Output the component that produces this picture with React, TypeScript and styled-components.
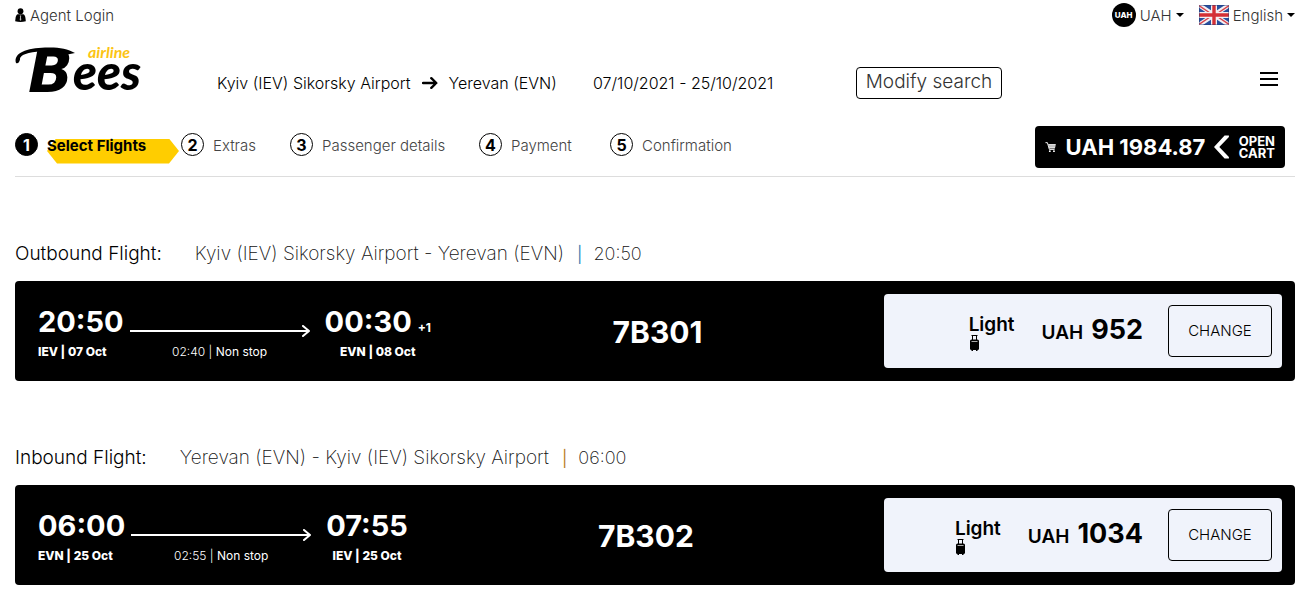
import React from "react";
import styled, { createGlobalStyle, css } from "styled-components";

const GlobalStyle = createGlobalStyle`
  *, *::before, *::after { box-sizing: border-box; }
  body {
    margin: 0;
    background: #fff;
    color: #000;
    font-family: Inter, "Liberation Sans", sans-serif;
    font-size: 16px;
  }
  button, select { font: inherit; color: inherit; }
`;

const Page = styled.div`
  padding: 0 9px 10px 15px;
`;

const TopBar = styled.div`
  display: flex;
  align-items: center;
  height: 30px;
  font-size: 15px;
  font-weight: 300;
  color: #333;
`;

const AgentLink = styled.a`
  display: flex;
  align-items: center;
  gap: 4px;
  margin-right: auto;
  color: inherit;
  text-decoration: none;
`;

const Picker = styled.label`
  display: flex;
  align-items: center;
  gap: 4px;
  margin-left: 15px;
`;

const CurrencyBadge = styled.span`
  display: flex;
  align-items: center;
  justify-content: center;
  width: 24px;
  height: 24px;
  border-radius: 50%;
  background: #000;
  color: #fff;
  font-size: 8px;
  font-weight: 800;
`;

const PickerSelect = styled.select`
  appearance: none;
  field-sizing: content;
  padding: 0;
  border: 0;
  background: none;
  cursor: pointer;
`;

const Header = styled.header`
  display: grid;
  grid-template-columns: 202px 376px 263px auto 1fr;
  align-items: center;
  height: 86px;
  padding: 19px 17px 0 0;
  font-weight: 300;
`;

const LogoLink = styled.a`
  display: block;
  width: 128px;
  height: 52px;
  margin-top: -26px;
`;

const Route = styled.div`
  display: flex;
  align-items: center;
  gap: 11px;
  white-space: nowrap;
`;

const OutlineButton = styled.button<{ $large?: boolean }>`
  border: 1px solid #000;
  border-radius: 4px;
  background: none;
  font-weight: 300;
  cursor: pointer;
  white-space: nowrap;
  ${(p) =>
    p.$large
      ? css`
          width: 104px;
          height: 52px;
          padding: 0 0 2px;
          font-size: 15px;
          margin-left: 25px;
        `
      : css`
          width: 146px;
          height: 32px;
          padding: 0 0 2px;
          font-size: 19px;
          color: #333;
        `}
`;

const MenuButton = styled.button`
  display: flex;
  flex-direction: column;
  gap: 4px;
  justify-self: end;
  width: 18px;
  margin-top: -8px;
  padding: 0;
  border: 0;
  background: none;
  cursor: pointer;
`;

const MenuBar = styled.span`
  height: 2px;
  width: 100%;
  background: #000;
`;

const ProgressRow = styled.div`
  display: flex;
  align-items: center;
  justify-content: space-between;
  height: 61px;
  padding: 1px 10px 0 0;
  border-bottom: 1px solid #ddd;
`;

const Steps = styled.ol`
  display: grid;
  grid-template-columns: 166px 109px 189px 131px auto;
  margin: 0;
  padding: 0 0 4px;
  list-style: none;
`;

const Step = styled.li`
  display: flex;
  align-items: center;
  gap: 9px;
`;

const StepNumber = styled.span<{ $active?: boolean }>`
  display: flex;
  align-items: center;
  justify-content: center;
  width: 23px;
  height: 23px;
  border: 1px solid #000;
  border-radius: 50%;
  background: ${(p) => (p.$active ? "#000" : "#fff")};
  color: ${(p) => (p.$active ? "#fff" : "#000")};
  font-size: 16px;
  font-weight: 700;
`;

const StepLabel = styled.span<{ $active?: boolean }>`
  position: relative;
  z-index: 0;
  padding-top: 1px;
  font-size: 15px;
  line-height: 17px;
  white-space: nowrap;
  font-weight: ${(p) => (p.$active ? 700 : 300)};
  color: ${(p) => (p.$active ? "#000" : "#444")};
  ${(p) =>
    p.$active &&
    css`
      &::before {
        content: "";
        position: absolute;
        z-index: -1;
        left: 0;
        top: 3px;
        width: 132px;
        height: 25px;
        background: #ffcd00;
        clip-path: polygon(9px 0, 122px 0, 100% 50%, 122px 100%, 10px 100%, 0 50%);
      }
    `}
`;

const CartButton = styled.button`
  display: flex;
  align-items: center;
  gap: 9px;
  width: 250px;
  height: 42px;
  padding: 0 10px;
  border: 0;
  border-radius: 4px;
  background: #000;
  color: #fff;
  font-size: 22px;
  font-weight: 700;
  cursor: pointer;
  white-space: nowrap;
`;

const CartCaption = styled.span`
  flex: 1;
  font-size: 13px;
  line-height: 12px;
  text-align: center;
  white-space: normal;
`;

const FlightSection = styled.section`
  padding-top: 64px;
`;

const FlightHeading = styled.h2`
  display: flex;
  height: 40px;
  padding-top: 2px;
  margin: 0;
  font-size: 19px;
  line-height: 22px;
  font-weight: 300;
  white-space: nowrap;
`;

const RouteSummary = styled.span`
  margin-left: 33px;
  font-weight: 200;
  color: #111;
`;

const Divider = styled.span<{ $color: string }>`
  margin: 0 11px 0 13px;
  font-size: 16px;
  font-weight: 400;
  color: ${(p) => p.$color};
`;

const HeadingTime = styled.span`
  font-size: 18px;
  font-weight: 200;
  color: #111;
`;

const FlightCard = styled.article`
  display: flex;
  align-items: center;
  height: 100px;
  padding: 0 13px 0 23px;
  border-radius: 4px;
  background: #000;
  color: #fff;
`;

const Stop = styled.div<{ $center?: boolean }>`
  padding-top: 1px;
  text-align: ${(p) => (p.$center ? "center" : "left")};
  white-space: nowrap;
`;

const Time = styled.div`
  height: 40px;
  font-size: 29px;
  line-height: 40px;
  font-weight: 700;
`;

const DayShift = styled.sup`
  margin-left: 6px;
  font-size: 12px;
  line-height: 12px;
  vertical-align: baseline;
`;

const Place = styled.div`
  font-size: 12px;
  line-height: 20px;
  font-weight: 800;
`;

const Leg = styled.div`
  width: 180px;
  margin: 0 15px 0 6px;
  padding-top: 2px;
  text-align: center;
`;

const LegLine = styled.div`
  display: flex;
  align-items: center;
  height: 40px;
  padding-top: 19px;
`;

const LegInfo = styled.div`
  font-size: 12px;
  line-height: 22px;
`;

const Duration = styled.span`
  font-weight: 300;
`;

const FlightNumber = styled.div`
  flex: 1;
  padding-top: 2px;
  text-align: center;
  font-size: 30px;
  font-weight: 700;
`;

const FarePanel = styled.div`
  display: flex;
  align-items: center;
  justify-content: flex-end;
  width: 398px;
  height: 74px;
  padding-right: 10px;
  border-radius: 4px;
  background: #f0f3fb;
  color: #000;
`;

const FareName = styled.div`
  display: flex;
  flex-direction: column;
  margin-right: 27px;
  padding-top: 2px;
  font-size: 19px;
  line-height: 22px;
  font-weight: 600;
  svg { margin: -1px 0 0 1px; }
`;

const Price = styled.div`
  padding-bottom: 4px;
  font-size: 19px;
  font-weight: 600;
  white-space: nowrap;
`;

const Amount = styled.strong`
  margin-left: 8px;
  font-size: 27px;
  font-weight: 700;
`;

const PersonIcon = () => (
  <svg width="11" height="14" viewBox="0 0 11 14" aria-hidden="true">
    <circle cx="5.5" cy="3.2" r="2.9" />
    <path d="M2.5 6.2H8.5Q10.6 7 10.8 13.2Q5.5 14.6 .2 13.2Q.4 7 2.5 6.2Z" />
    <path d="M5.5 7.2L6.3 8L5.9 8.8L6.3 12L5.5 12.8L4.7 12L5.1 8.8L4.7 8Z" fill="#bbb" />
  </svg>
);

const Caret = () => (
  <svg width="8" height="4" viewBox="0 0 8 4" aria-hidden="true">
    <path d="M0 0H8L4 4Z" />
  </svg>
);

const Flag = () => (
  <svg width="30" height="20" viewBox="0 0 30 20" aria-hidden="true">
    <rect width="30" height="20" fill="#29509e" />
    <path d="M0 0L30 20M30 0L0 20" stroke="#f3f0f3" strokeWidth="4.4" />
    <path d="M0 .6L14 10M30 19.4L16 10M30 .6L16 10M0 19.4L14 10" stroke="#d8434b" strokeWidth="1.4" />
    <path d="M15 0V20M0 10H30" stroke="#f3f0f3" strokeWidth="6" />
    <path d="M15 0V20M0 10H30" stroke="#d42f35" strokeWidth="3.4" />
    <rect x=".5" y=".5" width="29" height="19" fill="none" stroke="#1d3470" strokeOpacity=".4" />
  </svg>
);

const LogoDrawing = styled.svg`
  display: block;
  overflow: visible;
`;

const Logo = () => (
  <LogoDrawing width="128" height="52" viewBox="0 0 128 52" role="img" aria-label="Bees airline">
    <path d="M1 19C-2 9 12 4 30 3.500C42 3 52 4 60 9L50 11C42 7 34 7 26 7.500C14 8 4 11 5 15.500Q4 20 1 19Z" />
    <text fontFamily="Lato, sans-serif" fontStyle="italic" fontWeight="900">
      <tspan x="13" y="48" fontFamily="'DejaVu Sans', sans-serif" fontSize="59" fontWeight="700">B</tspan>
      <tspan x="58" y="46" fontSize="49">ees</tspan>
      <tspan x="73" y="14" fontSize="16" fontWeight="700" fill="#fcc414">airline</tspan>
    </text>
  </LogoDrawing>
);

const RouteArrow = () => (
  <svg width="16" height="14" viewBox="0 0 16 14" fill="none" stroke="#000" strokeWidth="2.4" aria-hidden="true">
    <path d="M1 7H14M9.300 2.200L14.300 7L9.300 11.800" strokeLinecap="round" strokeLinejoin="round" />
  </svg>
);

const CartIcon = () => (
  <svg width="12" height="12" viewBox="0 0 12 12" aria-hidden="true">
    <path d="M.5 1.500H2.500L4.500 8.500H10" fill="none" stroke="#fff" />
    <path d="M3.200 3H11.300L10.300 7.500H4.400Z" fill="#ddd" />
    <path d="M4 5H11" stroke="#777" strokeWidth=".5" />
    <circle cx="5" cy="10.300" r="1" fill="#fff" />
    <circle cx="9.300" cy="10.300" r="1" fill="#fff" />
  </svg>
);

const Chevron = () => (
  <svg width="16" height="24" viewBox="0 0 16 24" fill="#fff" aria-hidden="true">
    <path d="M11 0H15.500V1.500L5.500 12L15.500 22.500V24H11L0 12Z" />
  </svg>
);

const LegArrow = () => (
  <svg width="180" height="12" viewBox="0 0 180 12" fill="none" stroke="#fff" strokeWidth="2" aria-hidden="true">
    <path d="M0 6H179M173 1L179 6L173 11" strokeLinecap="round" strokeLinejoin="round" />
  </svg>
);

const Suitcase = () => (
  <svg width="9" height="16" viewBox="0 0 9 16" aria-hidden="true">
    <path d="M1.500 .5H7.500M2.500 .5V5M6.500 .5V5" fill="none" stroke="#000" />
    <rect y="4.500" width="9" height="10.500" rx="1.500" />
    <path d="M1.500 6.500H7.500" stroke="#aaa" />
    <path d="M1.500 15.500H3M6 15.500H7.500" stroke="#000" />
  </svg>
);

const steps = ["Select Flights", "Extras", "Passenger details", "Payment", "Confirmation"];

interface Flight {
  title: string;
  route: string;
  departTime: string;
  departPlace: string;
  duration: string;
  arriveTime: string;
  arrivePlace: string;
  dayShift?: string;
  number: string;
  price: string;
  divider: string;
}

const flights: Flight[] = [
  {
    title: "Outbound Flight:",
    route: "Kyiv (IEV) Sikorsky Airport - Yerevan (EVN)",
    departTime: "20:50",
    departPlace: "IEV | 07 Oct",
    duration: "02:40",
    arriveTime: "00:30",
    arrivePlace: "EVN | 08 Oct",
    dayShift: "+1",
    number: "7B301",
    price: "952",
    divider: "#3a7fb5",
  },
  {
    title: "Inbound Flight:",
    route: "Yerevan (EVN) - Kyiv (IEV) Sikorsky Airport",
    departTime: "06:00",
    departPlace: "EVN | 25 Oct",
    duration: "02:55",
    arriveTime: "07:55",
    arrivePlace: "IEV | 25 Oct",
    number: "7B302",
    price: "1034",
    divider: "#b87a1c",
  },
];

const FlightBlock = ({ flight }: { flight: Flight }) => (
  <FlightSection>
    <FlightHeading>
      {flight.title}
      <RouteSummary>{flight.route}</RouteSummary>
      <Divider $color={flight.divider}>|</Divider>
      <HeadingTime>{flight.departTime}</HeadingTime>
    </FlightHeading>
    <FlightCard>
      <Stop>
        <Time>{flight.departTime}</Time>
        <Place>{flight.departPlace}</Place>
      </Stop>
      <Leg>
        <LegLine>
          <LegArrow />
        </LegLine>
        <LegInfo>
          <Duration>{flight.duration} |</Duration> Non stop
        </LegInfo>
      </Leg>
      <Stop $center>
        <Time>
          {flight.arriveTime}
          {flight.dayShift && <DayShift>{flight.dayShift}</DayShift>}
        </Time>
        <Place>{flight.arrivePlace}</Place>
      </Stop>
      <FlightNumber>{flight.number}</FlightNumber>
      <FarePanel>
        <FareName>
          Light
          <Suitcase />
        </FareName>
        <Price>
          UAH<Amount>{flight.price}</Amount>
        </Price>
        <OutlineButton type="button" $large>
          CHANGE
        </OutlineButton>
      </FarePanel>
    </FlightCard>
  </FlightSection>
);

export default function App() {
  return (
    <>
      <GlobalStyle />
      <Page>
        <TopBar>
          <AgentLink href="#login">
            <PersonIcon />
            Agent Login
          </AgentLink>
          <Picker>
            <CurrencyBadge aria-hidden="true">UAH</CurrencyBadge>
            <PickerSelect aria-label="Currency" defaultValue="UAH">
              <option>UAH</option>
            </PickerSelect>
            <Caret />
          </Picker>
          <Picker>
            <Flag />
            <PickerSelect aria-label="Language" defaultValue="English">
              <option>English</option>
            </PickerSelect>
            <Caret />
          </Picker>
        </TopBar>
        <Header>
          <LogoLink href="#home">
            <Logo />
          </LogoLink>
          <Route>
            Kyiv (IEV) Sikorsky Airport
            <RouteArrow />
            Yerevan (EVN)
          </Route>
          <span>07/10/2021 - 25/10/2021</span>
          <OutlineButton type="button">Modify search</OutlineButton>
          <MenuButton type="button" aria-label="Menu">
            <MenuBar />
            <MenuBar />
            <MenuBar />
          </MenuButton>
        </Header>
        <ProgressRow>
          <Steps>
            {steps.map((label, i) => (
              <Step key={label}>
                <StepNumber $active={i === 0}>{i + 1}</StepNumber>
                <StepLabel $active={i === 0}>{label}</StepLabel>
              </Step>
            ))}
          </Steps>
          <CartButton type="button">
            <CartIcon />
            UAH 1984.87
            <Chevron />
            <CartCaption>OPEN CART</CartCaption>
          </CartButton>
        </ProgressRow>
        <main>
          {flights.map((flight) => (
            <FlightBlock key={flight.number} flight={flight} />
          ))}
        </main>
      </Page>
    </>
  );
}
